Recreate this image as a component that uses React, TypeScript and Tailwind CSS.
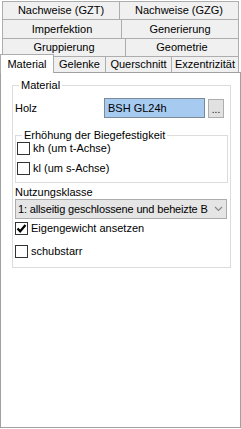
const font = { fontFamily: "Tahoma, 'Liberation Sans', Arial, sans-serif" };

function Tab({ label, w, h = "h-[19px]" }: { label: string; w: string; h?: string }) {
  return (
    <div
      className={`${w} ${h} -ml-px first:ml-0 flex items-center justify-center border border-[#adadad] bg-[#f0f0f0] text-[11px] leading-none text-black whitespace-nowrap`}
    >
      {label}
    </div>
  );
}

function BottomTab({ label, w }: { label: string; w: string }) {
  return (
    <div
      className={`${w} h-[16px] -ml-px flex items-center justify-center border border-b-0 border-[#adadad] bg-[#f0f0f0] text-[11px] leading-none whitespace-nowrap`}
    >
      {label}
    </div>
  );
}

function Check({ checked, label }: { checked?: boolean; label: string }) {
  return (
    <div className="flex items-center h-[19px] gap-[3px]">
      <div className="w-[13px] h-[13px] border border-[#333333] bg-white flex items-center justify-center">
        {checked && (
          <svg width="11" height="11" viewBox="0 0 11 11">
            <path d="M1.5 5.5 L4.2 8.3 L9.5 2" fill="none" stroke="#000" strokeWidth="2.2" />
          </svg>
        )}
      </div>
      <span className="text-[11px] whitespace-nowrap">{label}</span>
    </div>
  );
}

function App() {
  return (
    <div className="w-[241px] h-[429px] bg-white text-black overflow-hidden" style={font}>
      <div className="pl-[2px] pt-px flex flex-col">
        <div className="flex">
          <Tab label="Nachweise (GZT)" w="w-[118px]" />
          <Tab label="Nachweise (GZG)" w="w-[120px]" />
        </div>
        <div className="flex -mt-px">
          <Tab label="Imperfektion" w="w-[120px]" h="h-[20px]" />
          <Tab label="Generierung" w="w-[118px]" h="h-[20px]" />
        </div>
        <div className="flex -mt-px">
          <Tab label="Gruppierung" w="w-[124px]" />
          <Tab label="Geometrie" w="w-[114px]" />
        </div>
      </div>
      <div className="flex items-end h-[18px] -mt-[3px] relative z-10">
        <div className="w-[54px] h-[19px] -mb-px self-start bg-white border border-b-0 border-[#adadad] flex items-center justify-center text-[11px] leading-none">
          Material
        </div>
        <BottomTab label="Gelenke" w="w-[53px]" />
        <BottomTab label="Querschnitt" w="w-[67px]" />
        <BottomTab label="Exzentrizität" w="w-[68px]" />
      </div>
      <div className="w-[241px] h-[356px] border border-[#a0a0a0] bg-white pt-[12px] pl-[11px]">
        <div className="relative w-[219px] h-[183px] border border-[#dcdcdc] pt-[12px] pl-[2px]">
          <span className="absolute -top-[8px] left-[6px] bg-white px-[2px] text-[11px] leading-[14px]">Material</span>
          <div className="flex items-center h-[20px]">
            <span className="text-[11px] w-[89px]">Holz</span>
            <div className="w-[101px] h-[20px] border border-[#7a8a9c] bg-[#a6caf0] flex items-center pl-[3px] text-[11px]">
              BSH GL24h
            </div>
            <div className="ml-[3px] w-[16px] h-[19px] border border-[#adadad] bg-[#e1e1e1] flex items-end justify-center text-[10px] leading-[14px]">
              ...
            </div>
          </div>
          <div className="relative mt-[17px] w-[213px] h-[48px] border border-[#dcdcdc] pt-[3px] pl-px flex flex-col gap-px">
            <span className="absolute -top-[8px] left-[6px] bg-white px-[2px] text-[11px] leading-[14px] whitespace-nowrap">Erhöhung der Biegefestigkeit</span>
            <Check label="kh (um t-Achse)" />
            <Check label="kl (um s-Achse)" />
          </div>
          <div className="mt-[2px] text-[11px] leading-[14px]">Nutzungsklasse</div>
          <div className="relative w-[212px] h-[20px] border border-[#acacac] bg-[#e5e5e5] flex items-center pl-[2px] text-[11px] tracking-[-0.15px]">
            <span className="whitespace-nowrap">1: allseitig geschlossene und beheizte B</span>
            <svg width="9" height="6" viewBox="0 0 9 6" className="absolute right-[3px] top-[6px]">
              <path d="M1 1 L4.5 4.5 L8 1" fill="none" stroke="#888" strokeWidth="1.2" />
            </svg>
          </div>
          <div className="flex flex-col gap-[4px]">
            <Check checked label="Eigengewicht ansetzen" />
            <Check label="schubstarr" />
          </div>
        </div>
      </div>
    </div>
  );
}

export default App;
